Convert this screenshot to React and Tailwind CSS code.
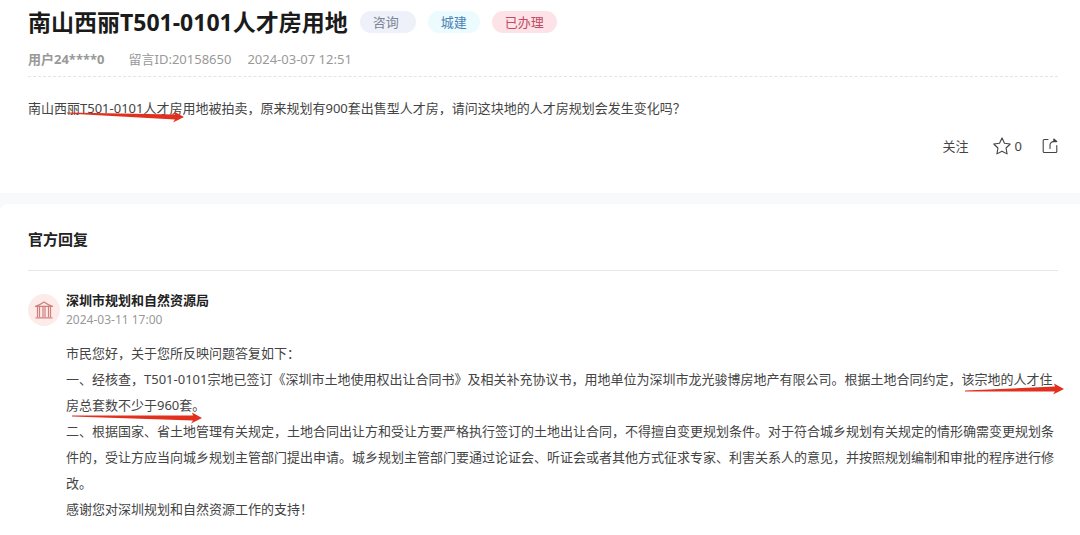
const TAGS = [
  { label: '咨询', className: 'bg-[#eef1fa] text-[#7d8494] pl-[13px] pr-[17px]' },
  { label: '城建', className: 'bg-[#ebfbfe] text-[#4a82b4] px-[13px]' },
  { label: '已办理', className: 'bg-[#fde3e7] text-[#c14a63] px-[13px]' },
]

function StarIcon() {
  return (
    <svg className="w-[18px] h-[18px]" viewBox="0 0 16 16" fill="none" stroke="currentColor" strokeWidth="1" strokeLinejoin="round">
      <path d="M8 .8l2.200 4.700 5.100.7-3.700 3.600.9 5.200L8 12.600 3.500 15l.9-5.200L.7 6.200l5.100-.7z" />
    </svg>
  )
}

function ShareIcon() {
  return (
    <svg className="w-4 h-4" viewBox="0 0 16 16" fill="none" stroke="currentColor" strokeWidth="1.1" strokeLinecap="round" strokeLinejoin="round">
      <path d="M6 1.500H2.200a1 1 0 0 0-1 1v11a1 1 0 0 0 1 1h11.600a1 1 0 0 0 1-1V7.500" />
      <path d="M8 10.500V7.300c0-2.300 1.500-3.700 3.700-3.700h2.800" />
      <path d="M11.800 1l3 2.500h-3z" fill="currentColor" />
    </svg>
  )
}

function BureauIcon() {
  return (
    <svg className="w-5 h-5" viewBox="0 0 20 20" fill="none" stroke="currentColor" strokeWidth="1.2" strokeLinejoin="round">
      <path d="M1.500 6.400C5 5 8 3.600 10 2c2 1.600 5 3 8.500 4.400z" />
      <path d="M3.500 6.500v10.500M5.500 6.500v10.500M9 6.500v10.500M11 6.500v10.500M14.500 6.500v10.500M16.500 6.500v10.500M1.500 17.800h17" />
    </svg>
  )
}

// Text with a red arrow drawn under it
function Marked({ children, arrow }) {
  return (
    <span className="relative">
      {children}
      {arrow}
    </span>
  )
}

function Arrow({ className, width, tail, tip }) {
  const neck = width - 10
  return (
    <svg className={className} width={width} height="13" viewBox={`0 0 ${width} 13`} fill="#e2301f" aria-hidden="true">
      <path d={`M0 ${tail - 0.5}L${neck + 1} ${tip - 2.5}L${neck} ${tip - 5.5}L${width} ${tip}L${neck - 1} ${tip + 5.5}L${neck + 1} ${tip + 2.5}L0 ${tail + 0.5}z`} />
    </svg>
  )
}

function Question() {
  return (
    <section className="bg-white pl-7 pr-[22px] pt-1 pb-[35px]">
      <div className="flex items-center gap-3">
        <h1 className="text-[23px] leading-9 font-bold text-[#1b1b1b]">南山西丽T501-0101人才房用地</h1>
        {TAGS.map(tag => (
          <span key={tag.label} className={`rounded-full text-[13px] leading-[22px] ${tag.className}`}>{tag.label}</span>
        ))}
      </div>

      <div className="flex items-center gap-4 pt-[7px] pb-[5px] text-[13px] leading-6 text-[#999]">
        <span className="font-bold mr-2">用户24****0</span>
        <span>留言ID:20158650</span>
        <time>2024-03-07 12:51</time>
      </div>

      <p className="border-t border-dashed border-[#e4e4e4] pt-[19px] text-[13px] leading-6 text-[#444]">
        南山西
        <Marked arrow={<Arrow className="absolute left-0 top-3" width={117} tail={2} tip={6} />}>丽T501-0101人才房</Marked>
        用地被拍卖，原来规划有900套出售型人才房，请问这块地的人才房规划会发生变化吗？
      </p>

      <div className="flex justify-end items-center pt-3.5 text-[13px] leading-6 text-[#444]">
        <button type="button" className="mr-6">关注</button>
        <button type="button" className="flex items-center gap-1 mr-5">
          <StarIcon />
          <span>0</span>
        </button>
        <button type="button" aria-label="分享">
          <ShareIcon />
        </button>
      </div>
    </section>
  )
}

function Reply() {
  return (
    <section className="bg-white rounded-tl-lg pl-7 pr-[22px] pt-[23px] pb-3">
      <h2 className="text-[15px] leading-6 font-bold text-[#222] pb-[19px] border-b border-[#e6e6e6]">官方回复</h2>

      <div className="flex gap-1.5 pt-[19px]">
        <div className="w-8 h-8 mt-1 shrink-0 rounded-full bg-[#fdebe9] text-[#cf7f7c] flex items-center justify-center">
          <BureauIcon />
        </div>
        <div className="flex-1">
          <h3 className="text-[13px] leading-5 font-bold text-[#222]">深圳市规划和自然资源局</h3>
          <time className="block text-xs leading-5 text-[#999]">2024-03-11 17:00</time>

          <div className="pt-2.5 text-[13px] leading-[26px] text-[#444]">
            <p>市民您好，关于您所反映问题答复如下：</p>
            <p>
              一、经核查，T501-0101宗地已签订《深圳市土地使用权出让合同书》及相关补充协议书，用地单位为深圳市龙光骏博房地产有限公司。根据土地合同约定，
              <Marked arrow={<Arrow className="absolute left-1 top-3" width={99} tail={9} tip={7} />}>该宗地的人才住</Marked>
              <Marked arrow={<Arrow className="absolute left-1.5 top-4" width={130} tail={4} tip={6} />}>房总套数不少于960套。</Marked>
            </p>
            <p>
              二、根据国家、省土地管理有关规定，土地合同出让方和受让方要严格执行签订的土地出让合同，不得擅自变更规划条件。对于符合城乡规划有关规定的情形确需变更规划条件的，受让方应当向城乡规划主管部门提出申请。城乡规划主管部门要通过论证会、听证会或者其他方式征求专家、利害关系人的意见，并按照规划编制和审批的程序进行修改。
            </p>
            <p>感谢您对深圳规划和自然资源工作的支持！</p>
          </div>
        </div>
      </div>
    </section>
  )
}

export default function App() {
  return (
    <main
      lang="zh-CN"
      className="min-h-screen bg-white font-['Noto_Sans','Noto_Sans_CJK_SC',sans-serif]"
    >
      <Question />
      <div className="bg-[#f7f9fa] pt-[11px]">
        <Reply />
      </div>
    </main>
  )
}
